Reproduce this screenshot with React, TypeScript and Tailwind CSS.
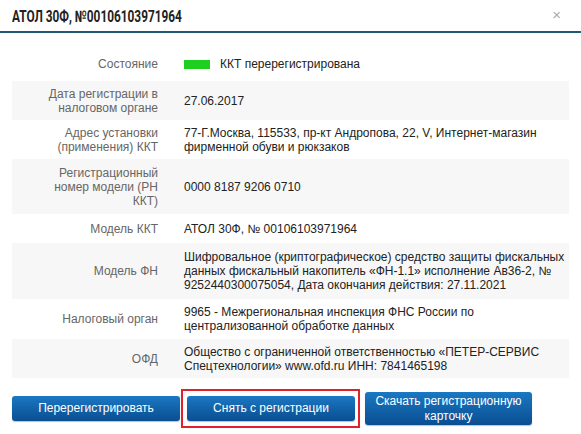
const rows = [
  { label: "Состояние", h: "h-[34px]", status: true, value: "ККТ перерегистрирована" },
  { label: "Дата регистрации в налоговом органе", h: "h-[39px]", value: "27.06.2017" },
  {
    label: "Адрес установки (применения) ККТ",
    h: "h-[39px]",
    value: "77-Г.Москва, 115533, пр-кт Андропова, 22, V, Интернет-магазин фирменной обуви и рюкзаков",
  },
  { label: "Регистрационный номер модели (РН ККТ)", h: "h-[55px]", value: "0000 8187 9206 0710" },
  { label: "Модель ККТ", h: "h-[29px]", value: "АТОЛ 30Ф, № 00106103971964" },
  {
    label: "Модель ФН",
    h: "h-[56px]",
    value:
      "Шифровальное (криптографическое) средство защиты фискальных данных фискальный накопитель «ФН-1.1» исполнение Ав36-2, № 9252440300075054, Дата окончания действия: 27.11.2021",
  },
  {
    label: "Налоговый орган",
    h: "h-[40px]",
    value: "9965 - Межрегиональная инспекция ФНС России по централизованной обработке данных",
  },
  {
    label: "ОФД",
    h: "h-[39px]",
    value: "Общество с ограниченной ответственностью «ПЕТЕР-СЕРВИС Спецтехнологии» www.ofd.ru ИНН: 7841465198",
  },
];

const btn =
  "flex items-center justify-center rounded-[3px] bg-gradient-to-b from-[#1b78c2] to-[#0a4e92] text-white text-[12px] leading-[15px] text-center shadow-[0_1px_1px_rgba(0,0,0,0.25)]";

export default function App() {
  return (
    <div className="w-[581px] h-[434px] bg-white font-['Liberation_Sans',Arial,sans-serif] overflow-hidden">
      <div className="flex items-center justify-between h-[33px] px-3 border-b-2 border-[#1e5a72]">
        <h1 className="font-['Roboto',sans-serif] font-bold text-[16px] text-[#222] whitespace-nowrap origin-left scale-x-[0.74] pt-[3px]">
          АТОЛ 30Ф, №00106103971964
        </h1>
        <span className="text-[#aaa] text-[15px] leading-none pr-[8px] pb-[3px]">×</span>
      </div>

      <div className="mx-3 mt-[14px] text-[12px] leading-[14px]">
        {rows.map((r, i) => (
          <div key={i} className={`flex items-center ${r.h} ${i % 2 === 1 ? "bg-[#f7f7f7]" : "bg-white"}`}>
            <div className="w-[158px] shrink-0 pl-[30px] pr-[12px] text-right text-[#666]">{r.label}</div>
            <div className="flex-1 pl-[14px] pr-[2px] text-[#222]">
              {r.status ? (
                <div className="flex items-center gap-[10px]">
                  <span className="inline-block w-[26px] h-[9px] bg-[#1fcf1f]" />
                  <span>{r.value}</span>
                </div>
              ) : (
                r.value
              )}
            </div>
          </div>
        ))}
      </div>

      <div className="flex items-center mx-3 mt-[11px]">
        <button className={`${btn} w-[168px] h-[25px]`}>Перерегистрировать</button>
        <div className="ml-[1px] border-2 border-[#e0202a] pl-[4px] pr-[3px] py-[5px]">
          <button className={`${btn} w-[168px] h-[25px]`}>Снять с регистрации</button>
        </div>
        <button className={`${btn} ml-[5px] w-[167px] h-[33px]`}>
          Скачать регистрационную
          <br />
          карточку
        </button>
      </div>
    </div>
  );
}
